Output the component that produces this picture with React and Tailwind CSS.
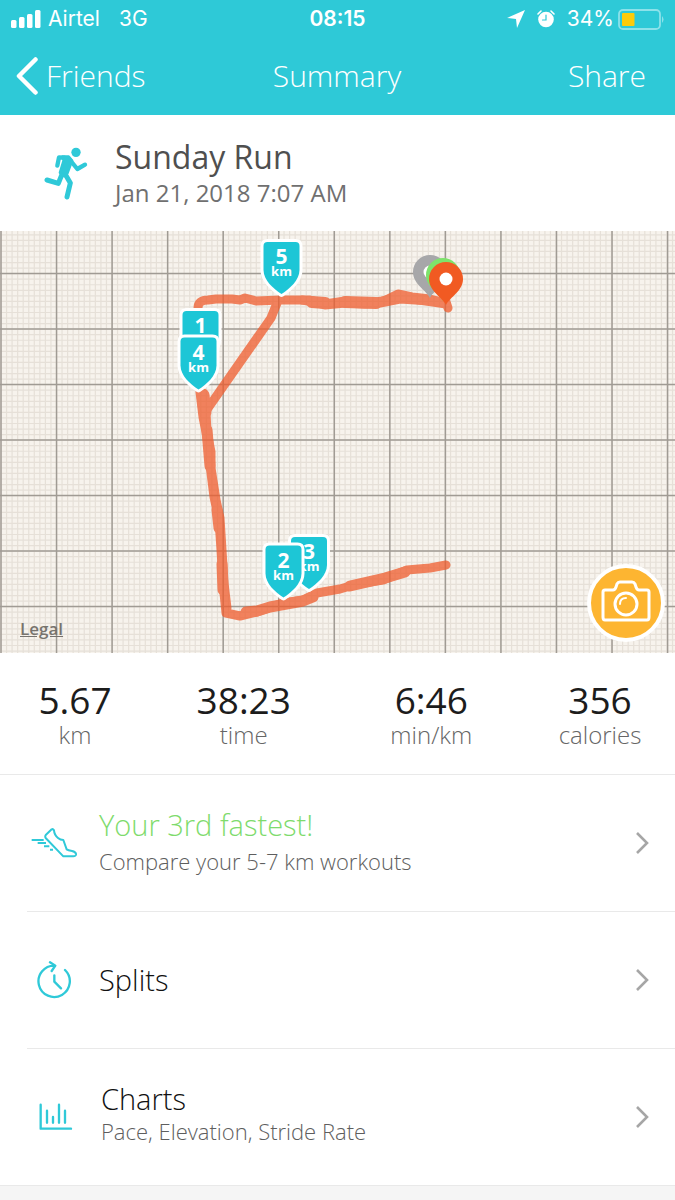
import React from "react";

const SHIELD =
  "M-14 0H14Q18 0 18 4V28C18 38 8 47 0 52C-8 47 -18 38 -18 28V4Q-18 0 -14 0Z";

const range = (start, step, count) =>
  Array.from({ length: count }, (_, i) => start + i * step);

function KmMarker({ x, y, n, unit = true }) {
  return (
    <g transform={`translate(${x} ${y})`}>
      <path d={SHIELD} fill="#fff" stroke="#fff" strokeWidth="6" strokeLinejoin="round" />
      <path d={SHIELD} fill="#1dc6d6" />
      <g fill="#fff" textAnchor="middle" className="font-['Open_Sans',sans-serif]">
        <text y="22" fontSize="21" className="font-bold">{n}</text>
        {unit && <text y="34" fontSize="13" className="font-bold">km</text>}
      </g>
    </g>
  );
}

function Pin({ x, y, color }) {
  return (
    <g transform={`translate(${x} ${y})`}>
      <path d="M0 26C-4 18 -17 12 -17 0A17 17 0 0 1 17 0C17 12 4 18 0 26Z" fill={color} />
      <circle r="6.5" fill="#fff" />
    </g>
  );
}

function RouteMap() {
  return (
    <svg viewBox="0 231 675 422" className="block h-auto w-full" role="img" aria-label="Route map">
      <rect y="231" width="675" height="422" fill="#f7f3ed" />
      <g stroke="#e6e0d8" strokeWidth="1.2">
        {range(1, 5.55, 122).map((x) => (
          <line key={x} x1={x} x2={x} y1="231" y2="653" />
        ))}
        {range(234.8, 5.55, 76).map((y) => (
          <line key={y} x1="0" x2="675" y1={y} y2={y} />
        ))}
      </g>
      <g stroke="#a09b94" strokeWidth="1.5">
        {range(1, 55.55, 13).map((x) => (
          <line key={x} x1={x} x2={x} y1="231" y2="653" />
        ))}
        {range(273.6, 55.5, 7).map((y) => (
          <line key={y} x1="0" x2="675" y1={y} y2={y} />
        ))}
      </g>
      <g
        opacity="0.75"
        fill="none"
        stroke="#ef5c2d"
        strokeWidth="9"
        strokeLinecap="round"
        strokeLinejoin="round"
      >
        <path d="M198 308Q198 300 208 300L216 299L232 299L240 300L245 298L256 301L281 300L310 300L325 304L345 301L370 303L382 301L400 297L446 304" />
        <path d="M302 300L314 302L325 305L345 303L365 304L380 303L400 299L446 302L448 308" />
        <path d="M386 300L398 294L412 297L430 299L446 303" />
        <path d="M312 302L325 303M345 302L376 303" strokeWidth="12" />
        <path d="M277 303L271 318L206 411" />
        <path d="M200 392L203 417L206 432L209 450L210 465L214 497L219 520L221 550L223 583L226 613L240 616L257 612L283 603L303 600L317 593L340 589L357 584L383 580L407 570L430 568L446 565" />
        <path d="M203 395L205 412" strokeWidth="13" />
        <path d="M206 412L207 432L211 452L211 468L216 500L220 518L222 550L224 583L227 608" />
        <path d="M217 510L219 528M207 430L210 466" strokeWidth="11" />
        <path d="M222 564L223 590M246 612L257 611L270 607L303 601L313 597M350 586L385 578L405 572" strokeWidth="11" />
      </g>
      <Pin x={430} y={272} color="#a7a7a9" />
      <Pin x={443} y={275} color="#7ee36b" />
      <Pin x={446} y={279} color="#f15a22" />
      <KmMarker x={281.5} y={242} n="5" />
      <KmMarker x={200.5} y={311} n="1" unit={false} />
      <KmMarker x={198.5} y={337.5} n="4" />
      <KmMarker x={309} y={537} n="3" />
      <KmMarker x={283.5} y={545.5} n="2" />
    </svg>
  );
}

function RunnerIcon() {
  return (
    <svg viewBox="132 81 132 159" className="h-[53px] w-11" fill="none" stroke="#2fc9d8" strokeLinecap="round" strokeLinejoin="round" aria-hidden="true">
      <circle cx="228" cy="97" r="14" fill="#2fc9d8" stroke="none" />
      <path d="M194 113L177 112L172 137M210 120L232 147L255 134" strokeWidth="13" />
      <path d="M194 160L211 189L201 231M188 158L175 190L141 180" strokeWidth="15" />
      <path d="M188 110H206L216 122L202 160L192 168L180 158L191 122Z" fill="#2fc9d8" strokeWidth="8" />
    </svg>
  );
}

function ShoeIcon() {
  return (
    <svg viewBox="93 117 138 90" className="h-[30px] w-[46px]" fill="none" stroke="#2fc9d8" strokeWidth="6" strokeLinejoin="round" aria-hidden="true">
      <path d="M155 121Q159 119 162 124Q163 138 174 147Q181 153 190 153L200 181Q204 184 216 186Q229 189 228 197Q227 202 220 202H190L137 147Q134 142 138 137Z" />
      <path d="M95 153H131M113 162H138M132 172H148M150 182H159" />
    </svg>
  );
}

function SplitsIcon() {
  return (
    <svg viewBox="111 65 105 114" className="h-[38px] w-[35px]" fill="none" stroke="#2fc9d8" strokeWidth="7" strokeLinecap="round" strokeLinejoin="round" aria-hidden="true">
      <path d="M195 92A47 47 0 1 1 165 79M150 69L166 79L155 95M163 108V127L183 147" />
    </svg>
  );
}

function ChartsIcon() {
  return (
    <svg viewBox="118 489 102 84" className="h-7 w-[34px]" fill="none" stroke="#2fc9d8" strokeWidth="7" strokeLinecap="round" strokeLinejoin="round" aria-hidden="true">
      <path d="M123 494V566H214M142 512V548M160 531V548M178 494V548M196 512V548" />
    </svg>
  );
}

function Chevron() {
  return (
    <svg viewBox="0 0 14 24" className="h-6 w-3.5 shrink-0" fill="none" stroke="#a6a6a6" strokeWidth="2.6" aria-hidden="true">
      <path d="M2 2L12 12L2 22" />
    </svg>
  );
}

function Stat({ value, unit }) {
  return (
    <div className="flex flex-col items-center">
      <dd className="order-1 text-[37px] leading-[42px] text-[#1c1c1c]">{value}</dd>
      <dt className="order-2 text-2xl leading-7 font-light text-[#666]">{unit}</dt>
    </div>
  );
}

function Row({ icon, title, detail, green, last }) {
  return (
    <li className={last ? "" : "ml-[27px] border-b border-[#e9e9e9]"}>
      <a href="#" className={`flex h-34 items-center pr-[26px] ${last ? "pl-[29px]" : ""}`}>
        <span className="flex w-[54px] shrink-0 justify-center">{icon}</span>
        <span className={`ml-[18px] flex grow flex-col ${last ? "pb-2" : ""}`}>
          <span className={`text-[29px] leading-9 font-light ${green ? "text-[#7edb6c]" : "text-[#111]"}`}>
            {title}
          </span>
          {detail && (
            <span className={`text-[22px] font-light text-[#5e5e5e] ${last ? "leading-7" : "leading-9"}`}>{detail}</span>
          )}
        </span>
        <Chevron />
      </a>
    </li>
  );
}

export default function App() {
  return (
    <div className="min-h-screen bg-[#f5f5f5] font-['Open_Sans',sans-serif]">
      <header className="bg-[#2ec9d7] text-white">
        <div className="grid h-[38px] grid-cols-3 items-center px-[11px] font-['Inter',sans-serif] text-[21px]">
          <div className="flex items-center gap-[7px]">
            <svg viewBox="0 0 30 18" className="h-[18px] w-[30px]" fill="#fff" aria-label="Signal">
              <rect y="10" width="5.5" height="8" rx="1.5" />
              <rect x="8" y="7" width="5.5" height="11" rx="1.5" />
              <rect x="16" y="4" width="5.5" height="14" rx="1.5" />
              <rect x="24" width="5.5" height="18" rx="1.5" />
            </svg>
            <span>Airtel</span>
            <span className="ml-3">3G</span>
          </div>
          <span className="text-center font-semibold">08:15</span>
          <div className="flex items-center justify-end">
            <svg viewBox="0 0 18 18" className="mr-3 h-[18px] w-[18px]" fill="#fff" aria-hidden="true">
              <path d="M18 0L10 18L9 9L0 8Z" />
            </svg>
            <svg viewBox="0 0 18 18" className="mr-3 h-[18px] w-[18px]" fill="none" stroke="#fff" strokeLinecap="round" aria-label="Alarm">
              <circle cx="9" cy="9.5" r="7.8" fill="#fff" stroke="none" />
              <path d="M1 4L4 1M17 4L14 1" strokeWidth="1.6" />
              <path d="M9 5V10H5.5" stroke="#2ec9d7" strokeWidth="1.2" />
            </svg>
            <span>34%</span>
            <svg viewBox="0 0 46 21" className="ml-1 h-[21px] w-[46px]" aria-label="Battery">
              <rect x="1" y="1" width="41" height="19" rx="4" fill="none" stroke="#8ce2ea" strokeWidth="1.8" />
              <rect x="4" y="4" width="12.5" height="13" rx="1" fill="#fccb0a" />
              <path d="M44 7Q47 10.5 44 14Z" fill="#8ce2ea" />
            </svg>
          </div>
        </div>
        <nav className="grid h-[77px] grid-cols-3 items-center pr-[29px] pb-0.5 pl-4 text-[30px] font-light">
          <button type="button" className="flex items-center gap-2 justify-self-start">
            <svg viewBox="0 0 22 38" className="h-[38px] w-[22px]" fill="none" stroke="#fff" strokeWidth="4.5" strokeLinecap="round" strokeLinejoin="round" aria-hidden="true">
              <path d="M19.5 2.5L3 19L19.5 35.5" />
            </svg>
            Friends
          </button>
          <h1 className="ml-3 text-center">Summary</h1>
          <button type="button" className="justify-self-end">Share</button>
        </nav>
      </header>

      <main className="bg-white">
        <section className="flex h-29 items-center gap-[27px] pl-11">
          <RunnerIcon />
          <div>
            <h2 className="text-[32px] leading-10 text-[#4f4f4f]">Sunday Run</h2>
            <p className="text-2xl leading-8 text-[#707070]">Jan 21, 2018 7:07 AM</p>
          </div>
        </section>

        <section className="relative">
          <RouteMap />
          <a href="#" className="absolute bottom-3 left-5 text-[17px] leading-6 font-semibold text-[#77736e] underline">
            Legal
          </a>
          <button type="button" aria-label="Add photo" className="absolute right-2.5 bottom-[11px] flex size-[78px] items-center justify-center rounded-full border-4 border-white bg-[#fdb531] pb-1">
            <svg viewBox="0 0 50 42" className="h-[42px] w-[50px]" fill="none" stroke="#fff" strokeWidth="3" strokeLinejoin="round" aria-hidden="true">
              <path d="M4 10H12Q14 10 15 7L16 4Q17 2 19 2H31Q33 2 34 4L35 7Q36 10 38 10H46Q48 10 48 12V37Q48 40 46 40H4Q2 40 2 37V12Q2 10 4 10Z" />
              <circle cx="25" cy="24" r="11" />
              <path d="M19 24Q19 18 25 18" strokeWidth="2" strokeLinecap="round" />
            </svg>
          </button>
        </section>

        <dl className="grid h-[122px] grid-cols-[4fr_5fr_5fr_4fr] items-center border-b border-[#e9e9e9]">
          <Stat value="5.67" unit="km" />
          <Stat value="38:23" unit="time" />
          <Stat value="6:46" unit="min/km" />
          <Stat value="356" unit="calories" />
        </dl>

        <ul className="border-b border-[#e9e9e9]">
          <Row icon={<ShoeIcon />} title="Your 3rd fastest!" detail="Compare your 5-7 km workouts" green />
          <Row icon={<SplitsIcon />} title="Splits" />
          <Row icon={<ChartsIcon />} title="Charts" detail="Pace, Elevation, Stride Rate" last />
        </ul>
      </main>
    </div>
  );
}
